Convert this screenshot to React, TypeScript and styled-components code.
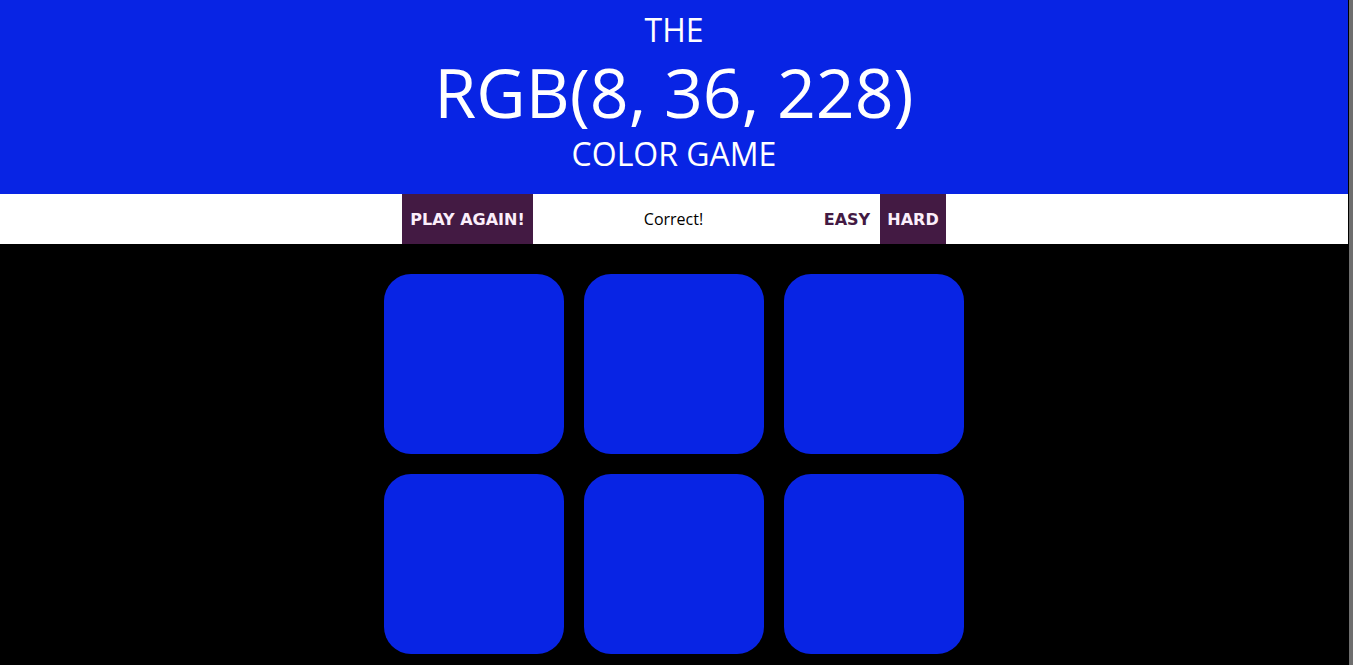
import React from "react";
import styled, { createGlobalStyle } from "styled-components";

const PICKED = "rgb(8, 36, 228)";
const PURPLE = "#431a43";

const Global = createGlobalStyle`
  html { background: #6e6e6e; }
  body {
    margin: 0 4px 0 0;
    background: #000;
    border-right: 1px solid #000;
    font-family: "Comic Sans MS", "Open Sans", sans-serif;
    overflow: hidden;
  }
`;

const Page = styled.div`
  min-height: 665px;
  background: #000;
`;

const Header = styled.h1`
  margin: 0;
  height: 194px;
  box-sizing: border-box;
  padding-top: 8px;
  background: ${PICKED};
  color: #fff;
  font-weight: normal;
  text-align: center;
  display: flex;
  flex-direction: column;
  align-items: center;
`;

const Line = styled.span<{ $size: number; $lh: number }>`
  display: block;
  font-size: ${(p) => p.$size}px;
  line-height: ${(p) => p.$lh}px;
  text-transform: uppercase;
`;

const Stripe = styled.div`
  height: 50px;
  background: #fff;
  display: flex;
  justify-content: center;
  align-items: stretch;
`;

const Button = styled.button<{ $w: number; $active?: boolean }>`
  width: ${(p) => p.$w}px;
  border: none;
  margin: 0;
  padding: 0;
  background: ${(p) => (p.$active ? PURPLE : "#fff")};
  color: ${(p) => (p.$active ? "#fbeefb" : PURPLE)};
  font-family: "DejaVu Sans", sans-serif;
  font-weight: bold;
  font-size: 16px;
  text-transform: uppercase;
  cursor: pointer;
`;

const Message = styled.span`
  width: 281px;
  display: flex;
  align-items: center;
  justify-content: center;
  font-size: 16px;
  color: #000;
`;

const Board = styled.div`
  width: 580px;
  margin: 30px auto 0;
  display: grid;
  grid-template-columns: repeat(3, 180px);
  gap: 20px;
`;

const Square = styled.div<{ $color: string }>`
  width: 180px;
  height: 180px;
  border-radius: 27px;
  background: ${(p) => p.$color};
`;

export default function App() {
  const colors = Array.from({ length: 6 }, () => PICKED);
  return (
    <Page>
      <Global />
      <Header>
        <Line $size={32} $lh={44}>The</Line>
        <Line $size={68} $lh={80}>RGB(8, 36, 228)</Line>
        <Line $size={32} $lh={44}>Color Game</Line>
      </Header>
      <Stripe>
        <Button $w={131} $active>Play Again!</Button>
        <Message>Correct!</Message>
        <Button $w={66}>Easy</Button>
        <Button $w={66} $active>Hard</Button>
      </Stripe>
      <Board>
        {colors.map((c, i) => (
          <Square key={i} $color={c} />
        ))}
      </Board>
    </Page>
  );
}
